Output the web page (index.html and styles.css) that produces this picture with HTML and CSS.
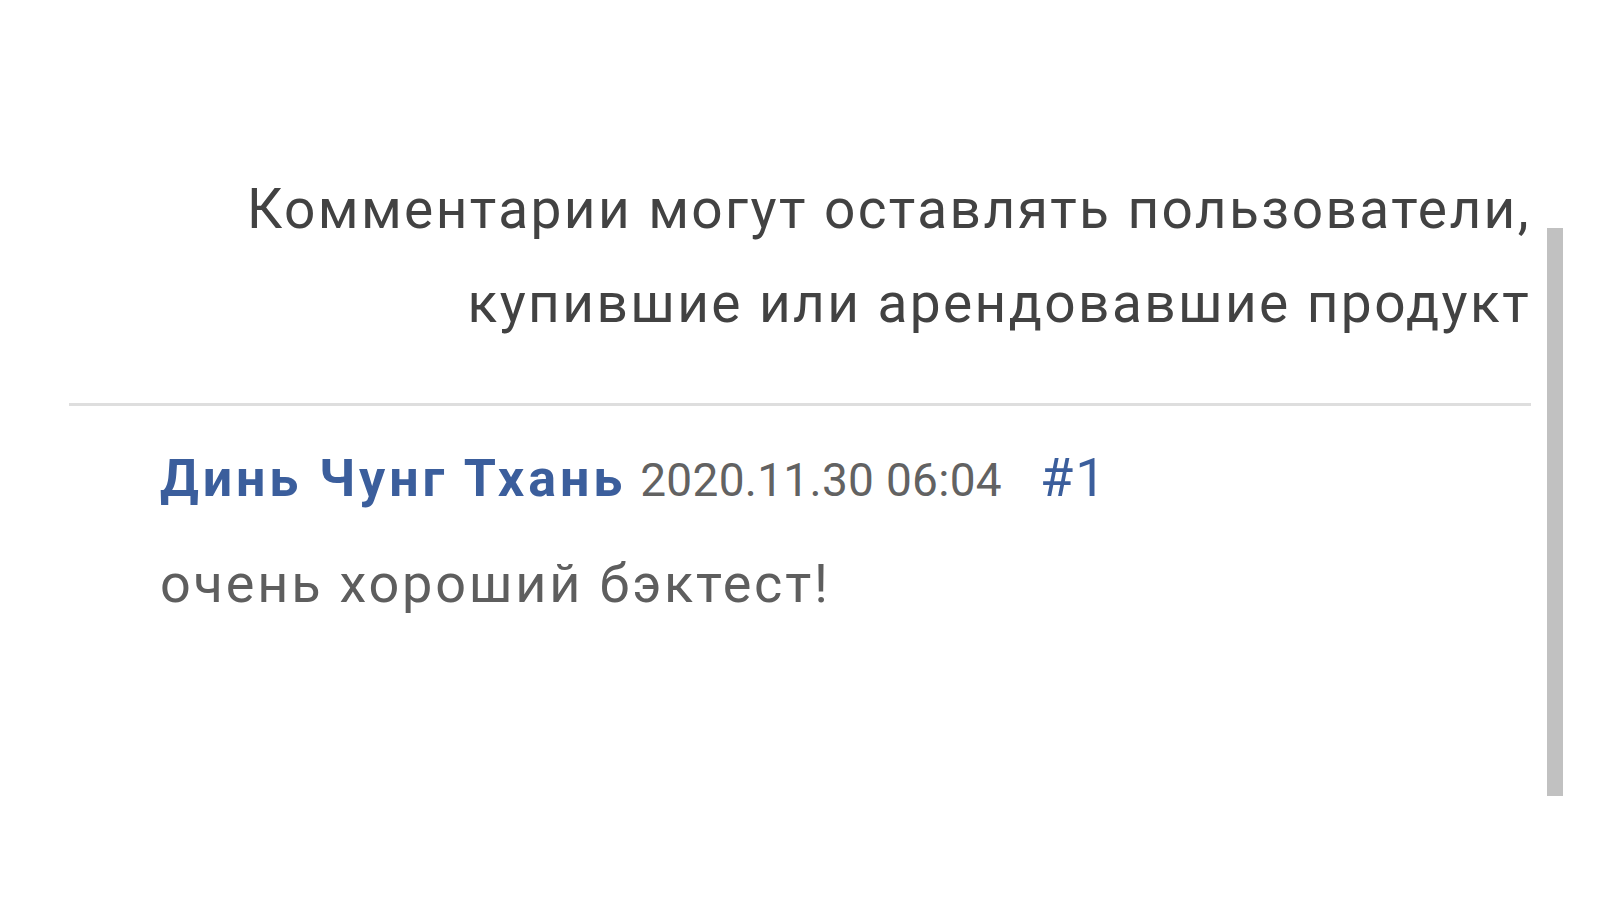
FILE: index.html
```html
<!DOCTYPE html>
<html lang="ru">
<head>
    <meta charset="UTF-8">
    <meta name="viewport" content="width=device-width, initial-scale=1.0">
    <title>Комментарии</title>
    <link rel="stylesheet" href="styles.css">
</head>
<body>
    <div class="page">
        <div class="panel">
            <p class="notice">Комментарии могут оставлять пользователи,<br>купившие или арендовавшие продукт</p>

            <div class="divider"></div>

            <div class="comment">
                <div class="comment-head">
                    <span class="author">Динь Чунг Тхань</span>
                    <span class="date">2020.11.30 06:04</span>
                    <a class="num" href="#c1">#1</a>
                </div>
                <p class="comment-text">очень хороший бэктест!</p>
            </div>
        </div>

        <!-- scroll thumb -->
        <div class="scroll-thumb"></div>
    </div>
</body>
</html>
```

FILE: styles.css
```css
body {
    margin: 0;
    background: #fff;
    font-family: Roboto, "Noto Sans", sans-serif;
}
.page {
    display: flex;
    align-items: flex-start;
    gap: 16px;
    padding-left: 69px;
}
.panel {
    width: 1462px;
    padding-top: 162px;
}
.notice {
    margin: 0;
    text-align: right;
    font-size: 55px;
    letter-spacing: 2.4px;
    line-height: 94px;
    color: #424242;
}
.divider {
    height: 3px;
    background: #dedede;
    margin-top: 53px;
}
.comment {
    padding-left: 91px;
    padding-top: 40px;
}
.comment-head {
    display: flex;
    align-items: baseline;
    line-height: 64px;
}
.author {
    font-weight: bold;
    font-size: 52px;
    letter-spacing: 3.9px;
    color: #3b5e9c;
}
.date {
    font-size: 46px;
    letter-spacing: 0.3px;
    color: #626262;
    margin-left: 14px;
}
.num {
    font-size: 54px;
    letter-spacing: 2px;
    color: #3b5e9c;
    text-decoration: none;
    margin-left: 38px;
}
.comment-text {
    margin: 40px 0 0;
    font-size: 54px;
    letter-spacing: 2.8px;
    color: #5e5e5e;
}
.scroll-thumb {
    width: 16px;
    height: 568px;
    margin-top: 228px;
    background: #c1c1c1;
}
```
